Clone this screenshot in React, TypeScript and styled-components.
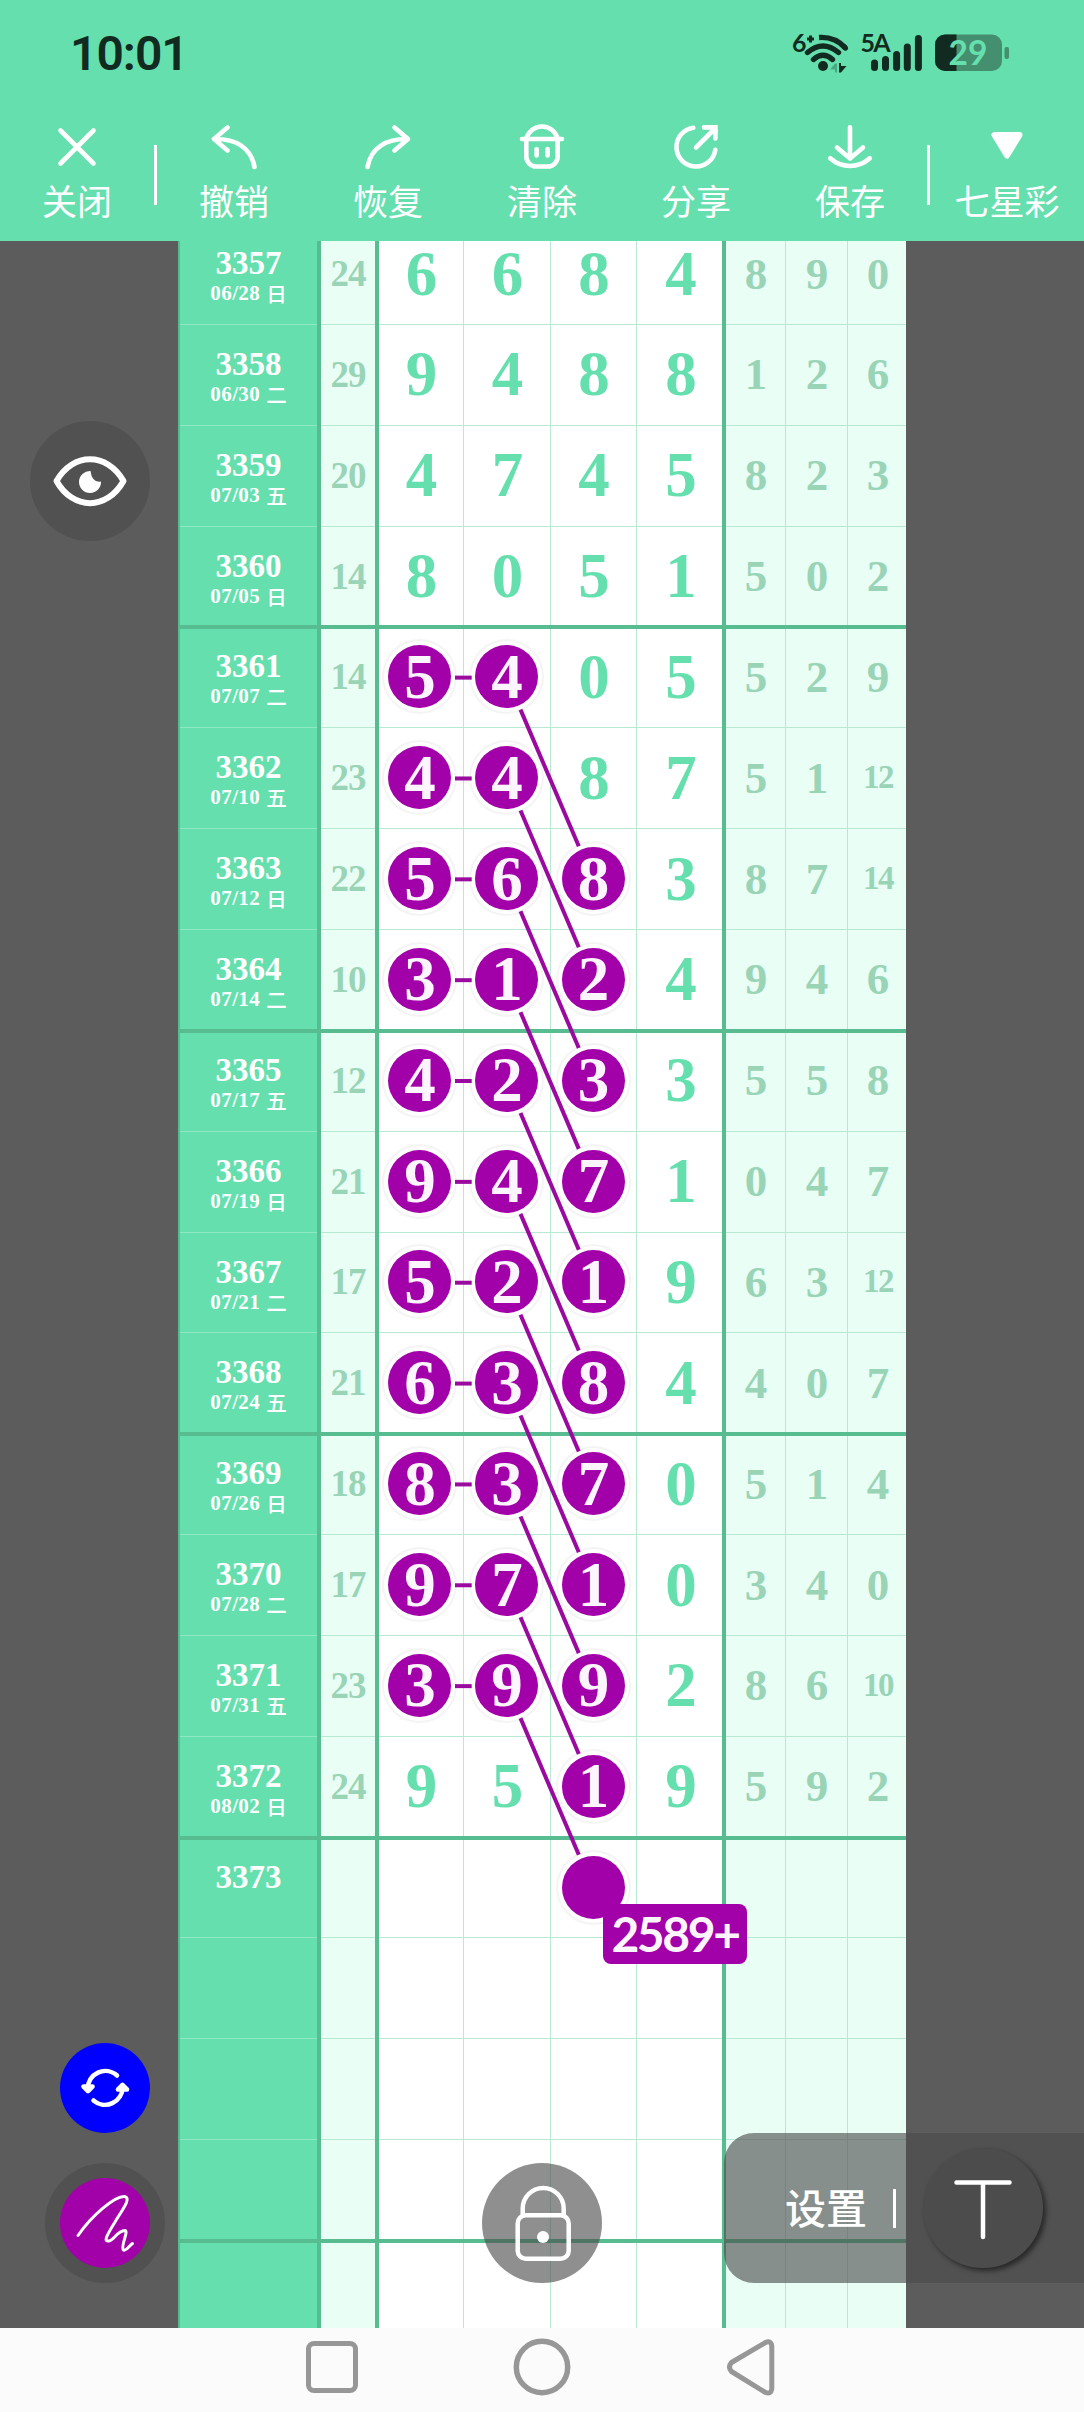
import React from "react";
import styled, { createGlobalStyle } from "styled-components";

const GREEN = "#66dfae";
const EDGE = "#57bd90";
const HAIR = "#b9e9d3";
const PALE = "#e9fff6";
const PURPLE = "#a200a8";
const INK = "#112b20";
const SMOKE = "rgba(74, 74, 74, 0.62)";
const SANS = `"Noto Sans CJK SC", "Noto Sans", sans-serif`;
const SERIF = `"Liberation Serif", "Noto Sans CJK SC", serif`;

const ROW_H = 100.85;
const BOARD_SHIFT = 16.9;
const HEADER_H = 241;

const Global = createGlobalStyle`
  html, body { margin: 0; padding: 0; }
  *, *::before, *::after { box-sizing: border-box; }
  svg { display: block; flex: none; overflow: visible; }
`;

const Screen = styled.div`
  width: 1084px;
  height: 2412px;
  display: flex;
  flex-direction: column;
  overflow: hidden;
  font-family: ${SANS};
  background: #5c5c5c;
`;

/* ---------- header ---------- */

const Header = styled.header`
  flex: none;
  height: ${HEADER_H}px;
  background: ${GREEN};
`;

const StatusBar = styled.div`
  height: 108px;
  padding: 0 74px 0 70px;
  display: flex;
  align-items: center;
  justify-content: space-between;
`;

const Clock = styled.span`
  font: 600 48px/56px Roboto, sans-serif;
  letter-spacing: -1px;
  color: ${INK};
`;

const StatusIcons = styled.div`
  display: flex;
  align-items: center;
  gap: 12px;
`;

const Toolbar = styled.nav`
  height: 133px;
  display: grid;
  grid-template-columns: 154px 3px repeat(5, 154px) 3px 1fr;
`;

const Tool = styled.div`
  padding-top: 16px;
  display: flex;
  flex-direction: column;
  align-items: center;
  color: #fff;
  svg { width: 46px; height: 46px; }
`;

const ToolLabel = styled.span`
  margin-top: 7px;
  font-size: 35px;
  line-height: 46px;
  white-space: nowrap;
`;

const ToolDivider = styled.i`
  height: 60px;
  margin-top: 37px;
  background: #fff;
`;

/* ---------- board ---------- */

const Stage = styled.main`
  position: relative;
  flex: 1;
  min-height: 0;
  overflow: hidden;
  padding: 0 178px;
`;

const Board = styled.div`
  margin-top: -${BOARD_SHIFT}px;
  background: #fff;
`;

const Row = styled.div`
  display: grid;
  grid-template-columns: 143px 58px 85px 87px 86px 89px 60px 62px 58px;
  height: ${ROW_H}px;
`;

type Edge = "first" | "last" | "mid";

const rule = (edge: Edge, hair: string) =>
  edge === "first"
    ? `inset 0 2px 0 ${EDGE}, inset 0 -1px 0 ${hair}`
    : edge === "last"
    ? `inset 0 -2px 0 ${EDGE}`
    : `inset 0 -1px 0 ${hair}`;

const Cell = styled.div<{ $edge: Edge; $thick?: boolean; $end?: boolean }>`
  display: flex;
  align-items: center;
  justify-content: center;
  font-family: ${SERIF};
  font-weight: 700;
  border-right: ${(p) => (p.$thick ? `4px solid ${EDGE}` : "0")};
  box-shadow: ${(p) => rule(p.$edge, HAIR)}${(p) => (p.$thick || p.$end ? "" : `, inset -1px 0 0 ${HAIR}`)};
`;

const IssueCell = styled(Cell)`
  flex-direction: column;
  justify-content: flex-start;
  padding-top: 22px;
  color: #fff;
  background: ${GREEN};
  border-left: 2px solid ${EDGE};
  box-shadow: ${(p) => rule(p.$edge, "#8ce9c3")};
`;

const IssueNo = styled.span`
  font-size: 33px;
  line-height: 34px;
`;

const IssueDate = styled.span`
  display: flex;
  align-items: center;
  gap: 6px;
  font-size: 21px;
  line-height: 26px;
  letter-spacing: 0.4px;
`;

const Weekday = styled.span`
  font: 500 20.5px/26px ${SANS};
  letter-spacing: 0;
`;

const SumCell = styled(Cell)`
  padding-bottom: 2px;
  font-size: 37px;
  letter-spacing: -1px;
  color: #9ad4b7;
  background: ${PALE};
`;

const DigitCell = styled(Cell)<{ $nudge?: boolean }>`
  padding: 0 0 2px ${(p) => (p.$nudge ? 3 : 0)}px;
  font-size: 63px;
  line-height: 62px;
  color: ${GREEN};
`;

const TailCell = styled(Cell)<{ $small?: boolean }>`
  font-size: ${(p) => (p.$small ? 33 : 45)}px;
  letter-spacing: ${(p) => (p.$small ? -1.5 : 0)}px;
  padding: 0 0 2px ${(p) => (p.$end ? 2 : 0)}px;
  color: #9ad4b7;
  background: ${PALE};
`;

const Ball = styled.span<{ $lead: boolean }>`
  width: 63px;
  height: 63px;
  margin-left: ${(p) => (p.$lead ? -4 : -2)}px;
  padding-left: 1px;
  border-radius: 50%;
  display: flex;
  align-items: center;
  justify-content: center;
  color: #fdf5fe;
  background: ${PURPLE};
  box-shadow: 0 0 0 4px #fff, 0 0 1px 6px #f4f4f4;
`;

const Links = styled.svg`
  position: absolute;
  left: 0;
  top: 0;
  width: 1084px;
  height: 2087px;
`;

const Note = styled.div`
  position: absolute;
  left: 603px;
  top: 1663px;
  width: 144px;
  height: 60px;
  border-radius: 8px;
  display: flex;
  align-items: center;
  justify-content: center;
  background: ${PURPLE};
  color: #fdf5fe;
  font: 700 48px/60px Lato, sans-serif;
  letter-spacing: -2.4px;
`;

/* ---------- floating controls ---------- */

const Float = styled.div<{ $x: number; $y: number; $size: number; $bg: string }>`
  position: absolute;
  left: ${(p) => p.$x}px;
  top: ${(p) => p.$y}px;
  width: ${(p) => p.$size}px;
  height: ${(p) => p.$size}px;
  border-radius: 50%;
  display: flex;
  align-items: center;
  justify-content: center;
  background: ${(p) => p.$bg};
`;

const Pen = styled.div`
  width: 90px;
  height: 90px;
  border-radius: 50%;
  background: ${PURPLE};
`;

const Settings = styled.div`
  position: absolute;
  right: 0;
  top: 1892px;
  width: 360px;
  height: 150px;
  padding-left: 61px;
  border-radius: 30px 0 0 30px;
  display: flex;
  align-items: center;
  background: ${SMOKE};
  color: #fff;
`;

const SettingsLabel = styled.span`
  padding-bottom: 4px;
  font-size: 41px;
  line-height: 50px;
  font-weight: 500;
`;

const SettingsDivider = styled.i`
  width: 3px;
  height: 39px;
  margin: 0 27px 0 26px;
  background: #fff;
`;

const TextButton = styled.div`
  width: 120px;
  height: 120px;
  border-radius: 50%;
  display: flex;
  align-items: center;
  justify-content: center;
  background: #4c4c4c;
  box-shadow: 3px 3px 5px rgba(0, 0, 0, 0.5);
`;

const NavBar = styled.footer`
  flex: none;
  height: 84px;
  padding: 10px 309px 0 304px;
  display: grid;
  grid-template-columns: 209px 210px 1fr;
  align-items: start;
  background: #fbfbfb;
`;

/* ---------- data ---------- */

type Draw = { no: string; date?: string; day?: string; sum?: string; d: string; tail: string[]; marks: number };

const draw = (no: string, date: string, day: string, sum: string, d: string, tail: string, marks = 0): Draw => ({
  no, date, day, sum, d, tail: tail.split(" "), marks,
});

/* marks is a bit mask over the first digits: 1, 2 and 4 for columns one to three */
const draws: Draw[] = [
  draw("3357", "06/28", "日", "24", "6684", "8 9 0"),
  draw("3358", "06/30", "二", "29", "9488", "1 2 6"),
  draw("3359", "07/03", "五", "20", "4745", "8 2 3"),
  draw("3360", "07/05", "日", "14", "8051", "5 0 2"),
  draw("3361", "07/07", "二", "14", "5405", "5 2 9", 3),
  draw("3362", "07/10", "五", "23", "4487", "5 1 12", 3),
  draw("3363", "07/12", "日", "22", "5683", "8 7 14", 7),
  draw("3364", "07/14", "二", "10", "3124", "9 4 6", 7),
  draw("3365", "07/17", "五", "12", "4233", "5 5 8", 7),
  draw("3366", "07/19", "日", "21", "9471", "0 4 7", 7),
  draw("3367", "07/21", "二", "17", "5219", "6 3 12", 7),
  draw("3368", "07/24", "五", "21", "6384", "4 0 7", 7),
  draw("3369", "07/26", "日", "18", "8370", "5 1 4", 7),
  draw("3370", "07/28", "二", "17", "9710", "3 4 0", 7),
  draw("3371", "07/31", "五", "23", "3992", "8 6 10", 7),
  draw("3372", "08/02", "日", "24", "9519", "5 9 2", 4),
  draw("3373", "", "", "", "", "", 4),
  ...Array.from({ length: 4 }, () => draw("", "", "", "", "", "")),
];

const edgeOf = (i: number): Edge => (i % 4 === 0 ? "first" : i % 4 === 3 ? "last" : "mid");

const DrawRow = ({ item, index }: { item: Draw; index: number }) => {
  const edge = edgeOf(index);
  return (
    <Row>
      <IssueCell $edge={edge} $thick>
        {item.no && <IssueNo>{item.no}</IssueNo>}
        {item.date && (
          <IssueDate>
            {item.date}
            <Weekday>{item.day}</Weekday>
          </IssueDate>
        )}
      </IssueCell>
      <SumCell $edge={edge} $thick>{item.sum}</SumCell>
      {[0, 1, 2, 3].map((c) => (
        <DigitCell key={c} $edge={edge} $thick={c === 3} $nudge={c === 3}>
          {item.marks & (1 << c) ? <Ball $lead={c === 0}>{item.d[c]}</Ball> : item.d[c]}
        </DigitCell>
      ))}
      {[0, 1, 2].map((c) => (
        <TailCell key={c} $edge={edge} $end={c === 2} $small={(item.tail[c] || "").length > 1}>
          {item.tail[c]}
        </TailCell>
      ))}
    </Row>
  );
};

const linked = draws.map((_, i) => i).filter((i) => i >= 4 && i <= 14);
const midY = (i: number) => i * ROW_H + ROW_H / 2 - BOARD_SHIFT - 1.3;

/* ---------- icons ---------- */

const Stroke = ({ w = 4.6, size = 46, children }: { w?: number; size?: number; children: React.ReactNode }) => (
  <svg width={size} height={size} viewBox={`0 0 ${size} ${size}`} fill="none" stroke="#fff" strokeWidth={w} strokeLinecap="round" strokeLinejoin="round">
    {children}
  </svg>
);

const tools: { label: string; icon: React.ReactNode }[] = [
  { label: "撤销", icon: <path d="M16.500 3.500 3 15l13.500 11.500M3 15C24 14.500 40 23 43.500 43" /> },
  { label: "恢复", icon: <path d="M29.500 3.500 43 15 29.500 26.500M43 15C22 14.500 6 23 2.500 43" /> },
  {
    label: "清除",
    icon: <path d="M3 15H43M7.300 15A16.100 16.100 0 0 1 38.700 15M7.300 15V32.500a10 10 0 0 0 10 10H28.700a10 10 0 0 0 10-10V15M17.600 25V31.500M28.600 25V31.500" />,
  },
  {
    label: "分享",
    icon: (
      <>
        <path d="M20.300 3.700A19.500 19.500 0 1 0 42.300 25.700M23 23.500 41 5.500M31 3.400H40M42.400 6V14.500" />
        <path d="M36 1.100H44.700V10Z" fill="#fff" stroke="none" />
      </>
    ),
  },
  { label: "保存", icon: <path d="M23 3.300V34M10 23.500 23 34.500 36 23.500M3.200 34.300A29.500 29.500 0 0 0 42.800 34.300" /> },
];

const WifiIcon = () => (
  <svg width="58" height="44" viewBox="790 33 58 44" fill="none" stroke={INK} strokeWidth="5.400" strokeLinecap="round">
    <text x="791" y="53" fill={INK} stroke="none" fontFamily="Lato, sans-serif" fontWeight="700" fontSize="25">6</text>
    <path d="M809.500 36.500V43.500M806 40H813" strokeWidth="3" strokeLinecap="butt" />
    <path d="M818 38.500Q834 37.500 844.500 49" strokeLinecap="butt" />
    <path d="M843 47.600L844.300 49" />
    <path d="M806.500 53.500Q822 40.500 837.500 53.500M812.500 60.500Q822 52 831.500 60.500" />
    <circle cx="822" cy="67" r="5" fill={INK} stroke="none" />
    <path d="M829 70.500 834 64.500H836V73.500H834V70.500Z" fill="#4aa982" stroke="none" />
    <path d="M838 64H840V67H845.500L840 73.500H838Z" fill={INK} stroke="none" />
  </svg>
);

const CellIcon = () => (
  <svg width="61" height="44" viewBox="860 33 61 44" stroke={INK} strokeWidth="7" strokeLinecap="round">
    <text x="859.500" y="53" fill={INK} stroke="none" fontFamily="Lato, sans-serif" fontWeight="700" fontSize="25" textLength="30">5A</text>
    {[[873.5, 64], [884.5, 60.5], [895.6, 55.5], [906.3, 48], [917.4, 39.5]].map(([x, y]) => (
      <path key={x} d={`M${x} ${y}V68.500`} />
    ))}
  </svg>
);

const BatteryIcon = () => (
  <svg width="76" height="44" viewBox="935 33 76 44">
    <rect x="936" y="35.500" width="67" height="36.500" rx="10" fill="#448f6f" />
    <path d="M957.500 35.500H946a10 10 0 0 0-10 10V62a10 10 0 0 0 10 10H957.500Z" fill={INK} />
    <rect x="1005.500" y="48" width="4.500" height="12" rx="2" fill="#448f6f" />
    <text x="949.500" y="66" fill={GREEN} fontFamily="Lato, sans-serif" fontWeight="700" fontSize="33.500">29</text>
  </svg>
);

const EyeIcon = () => (
  <svg width="74" height="54" viewBox="-37 -27 74 54">
    <path d="M-33.500 0C-17 -29 17 -29 33.500 0C17 29.500 -17 29.500 -33.500 0Z" fill="none" stroke="#fff" strokeWidth="6" strokeLinejoin="round" />
    <path d="M0.500 -10A11 11 0 1 0 11 0.500Q2 2 0.500 -10Z" fill="#fff" />
  </svg>
);

export default function App() {
  return (
    <Screen>
      <Global />
      <Header>
        <StatusBar>
          <Clock>10:01</Clock>
          <StatusIcons>
            <WifiIcon />
            <CellIcon />
            <BatteryIcon />
          </StatusIcons>
        </StatusBar>
        <Toolbar>
          <Tool>
            <Stroke><path d="M6.500 6.500 39.500 39.500M39.500 6.500 6.500 39.500" /></Stroke>
            <ToolLabel>关闭</ToolLabel>
          </Tool>
          <ToolDivider />
          {tools.map((t) => (
            <Tool key={t.label}>
              <Stroke>{t.icon}</Stroke>
              <ToolLabel>{t.label}</ToolLabel>
            </Tool>
          ))}
          <ToolDivider />
          <Tool>
            <Stroke w={6}><path d="M10.500 11H35.500L23 31.500Z" fill="#fff" /></Stroke>
            <ToolLabel>七星彩</ToolLabel>
          </Tool>
        </Toolbar>
      </Header>

      <Stage>
        <Board>
          {draws.map((d, i) => (
            <DrawRow key={i} item={d} index={i} />
          ))}
        </Board>

        <Links viewBox="0 0 1084 2087" stroke="#9a0a9f" strokeWidth="4">
          {linked.map((i) => (
            <React.Fragment key={i}>
              <path d={`M455 ${midY(i) + 1}H471.700`} />
              <path d={`M520.500 ${midY(i) + 33}L578.800 ${midY(i + 2) - 32}`} />
            </React.Fragment>
          ))}
        </Links>
        <Note>2589+</Note>

        <Float $x={30} $y={180} $size={120} $bg={SMOKE}><EyeIcon /></Float>

        <Float $x={60} $y={1802} $size={90} $bg="#0000ff">
          <Stroke size={48} w={4.6}>
            <path d="M36 11.500A17.500 17.500 0 0 0 6.800 25M12.500 36.500A17.500 17.500 0 0 0 41.500 23" />
            <path d="M2.500 22.500H11.500L7 27ZM37 25.500H46L41.500 21Z" fill="#fff" />
          </Stroke>
        </Float>

        <Float $x={45} $y={1922} $size={120} $bg={SMOKE}>
          <Pen>
            <Stroke size={90} w={3}>
              <path d="M18 57.500C32 37 55 18 64.500 18.500C72 20 62 32 55 44C45 60 44 63.500 49 63C54 62 57 53 65 52.500C69 53 60 69 63.500 72C66 73.500 69 68 72.500 65.500" />
            </Stroke>
          </Pen>
        </Float>

        <Float $x={482} $y={1922} $size={120} $bg={SMOKE}>
          <Stroke size={80} w={4.5}>
            <rect x="15.700" y="32.300" width="51" height="43.500" rx="8" />
            <path d="M20.700 32V25.500a20.500 20.500 0 0 1 41 0V32" />
            <circle cx="41" cy="54" r="6" fill="#fff" stroke="none" />
          </Stroke>
        </Float>

        <Settings>
          <SettingsLabel>设置</SettingsLabel>
          <SettingsDivider />
          <TextButton>
            <Stroke size={60} w={4.5}><path d="M3.500 4.500H56.500M30 4.500V59" /></Stroke>
          </TextButton>
        </Settings>
      </Stage>

      <NavBar>
        <svg width="56" height="60" fill="none" stroke="#979797" strokeWidth="5">
          <rect x="4.500" y="5.500" width="47" height="47" rx="5.500" />
        </svg>
        <svg width="60" height="60" fill="none" stroke="#979797" strokeWidth="5.500">
          <circle cx="29" cy="29" r="25.700" />
        </svg>
        <svg width="50" height="60" fill="none" stroke="#979797" strokeWidth="5" strokeLinejoin="round">
          <path d="M42.500 4.500 8.500 24.500Q4.500 29 8.500 33.500L42.500 54.500Q48 56.500 48.800 51V8Q48 2 42.500 4.500Z" transform="translate(0 0)" />
        </svg>
      </NavBar>
    </Screen>
  );
}
